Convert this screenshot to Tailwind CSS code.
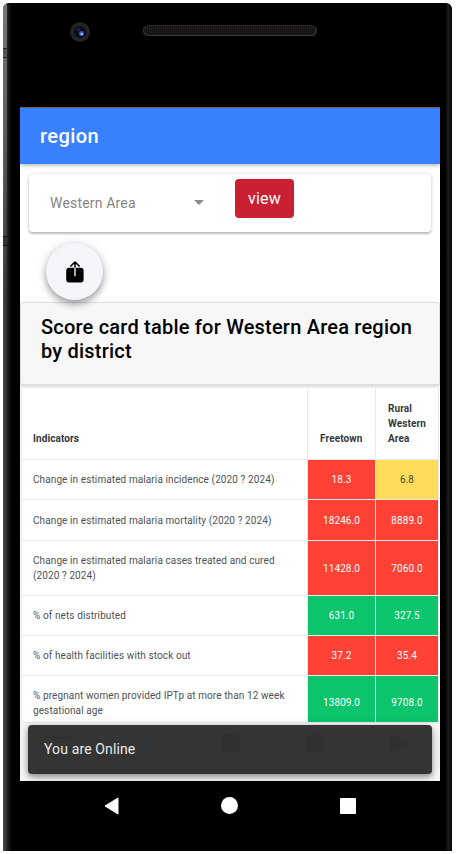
<!DOCTYPE html>
<html lang="en">
<head>
<meta charset="utf-8">
<title>region</title>
<script src="https://cdn.jsdelivr.net/npm/@tailwindcss/browser@4"></script>
</head>
<body class="w-[456px] h-[854px] overflow-hidden bg-white pl-[3px] pt-[3px] font-[Roboto,sans-serif]">
<div class="relative w-[449px] h-[848px] overflow-hidden rounded-t-[6px] bg-black flex flex-col">
  <!-- bezel edges -->
  <div class="absolute inset-y-0 left-0 w-[11px] rounded-tl-[10px] bg-linear-to-r from-[#4a4a4a] via-[#191919] to-black"></div>
  <div class="absolute top-0 left-0 h-[300px] w-[4px] bg-linear-to-b from-[#777] to-[#444]/0"></div>
  <div class="absolute left-0 top-[45px] h-[10px] w-[4px] border-y border-[#222] bg-[#555]"></div>
  <div class="absolute left-0 top-[233px] h-[10px] w-[4px] border-y border-[#111] bg-[#333]"></div>
  <div class="absolute inset-y-0 right-0 w-[8px] rounded-tr-[10px] bg-linear-to-r from-black via-[#1e1e1e] to-[#050505]"></div>

  <!-- camera and speaker -->
  <div class="h-[104px] shrink-0 flex items-start">
    <div class="ml-[67px] mt-[19px] size-[20px] rounded-full bg-[#232323] flex items-center justify-center">
      <svg class="size-[14px]" viewBox="0 0 14 14"><circle cx="7" cy="7" r="6" fill="#0b0d1c"/><circle cx="5.500" cy="4.500" r="1.500" fill="#1b2760"/><circle cx="8.500" cy="8.400" r="2.700" fill="#2b409c"/><circle cx="8.700" cy="9" r="1.400" fill="#99adf5"/></svg>
    </div>
    <div class="ml-[53px] mt-[22px] w-[174px] h-[11px] rounded-full border border-[#3b3937] border-t-[#242424] bg-[repeating-linear-gradient(90deg,#12110f_0_1px,#221f1b_1px_2px)]"></div>
  </div>

  <!-- app screen -->
  <div class="relative ml-[17px] w-[420px] h-[674px] shrink-0 overflow-hidden bg-white flex flex-col">
    <header class="relative z-10 h-[57px] shrink-0 bg-[#3880ff] border-t border-[#77604f] pl-[20px] flex items-center text-[20px] font-medium tracking-[0.4px] text-white shadow-[0_1px_4px_rgba(0,0,0,0.35)]"><span id="title">region</span></header>

    <div class="mt-[10px] ml-[9px] w-[402px] h-[58px] shrink-0 rounded-[4px] bg-white shadow-[0_2px_2px_rgba(0,0,0,0.22),0_0_4px_rgba(0,0,0,0.14)] flex items-start">
      <div class="ml-[21px] mt-[19px] w-[154px] flex items-center justify-between text-[14px] leading-[20px] tracking-[0.18px] text-[#858585]">
        <span>Western Area</span>
        <svg class="w-[10px] h-[5px] -mt-[2px]" viewBox="0 0 10 5"><path d="M0 0h10L5 5z" fill="#8a8a8a"/></svg>
      </div>
      <button class="ml-[31px] mt-[5px] w-[59px] h-[39px] rounded-[4px] bg-[#c92133] text-white text-[16px] leading-[24px] tracking-[0.2px]">view</button>
    </div>

    <div class="h-[70px] shrink-0 pl-[26px] pt-[11px]">
      <div class="relative z-10 size-[57px] rounded-full bg-[#f4f5f9] shadow-[0_4px_7px_rgba(0,0,0,0.32),0_1px_12px_rgba(0,0,0,0.12)] flex items-center justify-center">
        <svg class="w-[18px] h-[22px]" viewBox="0 0 18 22"><rect x="0.2" y="6.8" width="17.4" height="14.8" rx="3" fill="#000"/><path d="M4.8 5L9 1l4.200 4M9 1v6" fill="none" stroke="#000" stroke-width="1.6" stroke-linecap="round" stroke-linejoin="round"/><path d="M9 6.800v8" stroke="#f4f5f9" stroke-width="1.400" stroke-linecap="round"/></svg>
      </div>
    </div>

    <div class="h-[83px] shrink-0 border border-[#dfdfdf] rounded-[3px] bg-[#f7f7f7] pl-[20px] pt-[12px] text-[20px] leading-[24px] font-medium tracking-[0.21px] text-black shadow-[0_1px_3px_rgba(0,0,0,0.22)]"><div>Score card table for Western Area region</div><div>by district</div></div>

    <!-- score table -->
    <div class="mt-[2px] ml-[1px] w-[418px] h-[336px] shrink-0 grid grid-cols-[286px_68px_63px] grid-rows-[72px_40px_41px_55px_40px_40px_47px] border-t border-l border-[#e6eaee] text-[10px] leading-[15px] tracking-[0.1px] text-[#4c5257] [&>*]:border-b [&>*]:border-r [&>*]:border-[#e6eaee]">
      <div class="flex items-end pl-[11px] pb-[13px] font-bold text-[#33383d]">Indicators</div>
      <div class="flex items-end pl-[12px] pb-[13px] font-bold text-[#33383d]">Freetown</div>
      <div class="flex items-end pl-[12px] pb-[13px] font-bold text-[#33383d]"><span>Rural<br>Western<br>Area</span></div>

      <div class="flex items-center pl-[11px]">Change in estimated malaria incidence (2020 ? 2024)</div>
      <div class="flex items-center justify-center bg-[#ff4136] text-white">18.3</div>
      <div class="flex items-center justify-center bg-[#ffdc5a] text-[#4c4a33]">6.8</div>

      <div class="flex items-center pl-[11px]">Change in estimated malaria mortality (2020 ? 2024)</div>
      <div class="flex items-center justify-center bg-[#ff4136] text-white">18246.0</div>
      <div class="flex items-center justify-center bg-[#ff4136] text-white">8889.0</div>

      <div class="flex items-center pl-[11px]"><span>Change in estimated malaria cases treated and cured<br>(2020 ? 2024)</span></div>
      <div class="flex items-center justify-center bg-[#ff4136] text-white">11428.0</div>
      <div class="flex items-center justify-center bg-[#ff4136] text-white">7060.0</div>

      <div class="flex items-center pl-[11px]">% of nets distributed</div>
      <div class="flex items-center justify-center bg-[#0bc46b] text-white">631.0</div>
      <div class="flex items-center justify-center bg-[#0bc46b] text-white">327.5</div>

      <div class="flex items-center pl-[11px]">% of health facilities with stock out</div>
      <div class="flex items-center justify-center bg-[#ff4136] text-white">37.2</div>
      <div class="flex items-center justify-center bg-[#ff4136] text-white">35.4</div>

      <div class="flex items-start pt-[12px] pl-[11px]"><span>% pregnant women provided IPTp at more than 12 week<br>gestational age</span></div>
      <div class="flex items-start pt-[19px] justify-center bg-[#0bc46b] text-white">13809.0</div>
      <div class="flex items-start pt-[19px] justify-center bg-[#0bc46b] text-white">9708.0</div>
    </div>

    <div class="flex-1 bg-[#f7f7f7]"></div>

    <!-- toast -->
    <div class="absolute left-[8px] top-[618px] w-[404px] h-[49px] rounded-[4px] bg-[#343434] pl-[16px] flex items-center text-[14px] tracking-[0.13px] text-[#e9e9e9] shadow-[0_3px_5px_rgba(0,0,0,0.3),0_2px_12px_rgba(0,0,0,0.22)]">
      <span class="-mt-px">You are Online</span>
      <svg class="absolute inset-0 w-[404px] h-[49px]" viewBox="0 0 404 49" fill="#303030"><circle cx="119" cy="19" r="9" fill="#323538"/><rect x="24" y="12" width="19" height="2"/><rect x="193" y="11" width="19" height="16" rx="3"/><rect x="197" y="9" width="11" height="3"/><rect x="277" y="11" width="19" height="16" rx="3"/><rect x="281" y="9" width="11" height="3"/><path d="M202 15v8M198 19h8M286 15v8M282 19h8" stroke="#343434" stroke-width="1.500"/><rect x="362" y="11" width="11" height="15" rx="4"/><path d="M370 17h5v-3l6 5-6 5v-3h-5z"/></svg>
    </div>
  </div>

  <!-- system navigation -->
  <div class="h-[49px] shrink-0 pl-[101px] flex items-center">
    <svg class="w-[15px] h-[18px]" viewBox="0 0 15 18"><path d="M14 1v16L1 9z" fill="#fff" stroke="#fff" stroke-linejoin="round"/></svg>
    <div class="ml-[102px] size-[17px] rounded-full bg-white"></div>
    <div class="ml-[102px] size-[16px] rounded-[1px] bg-white"></div>
  </div>
</div>
</body>
</html>
